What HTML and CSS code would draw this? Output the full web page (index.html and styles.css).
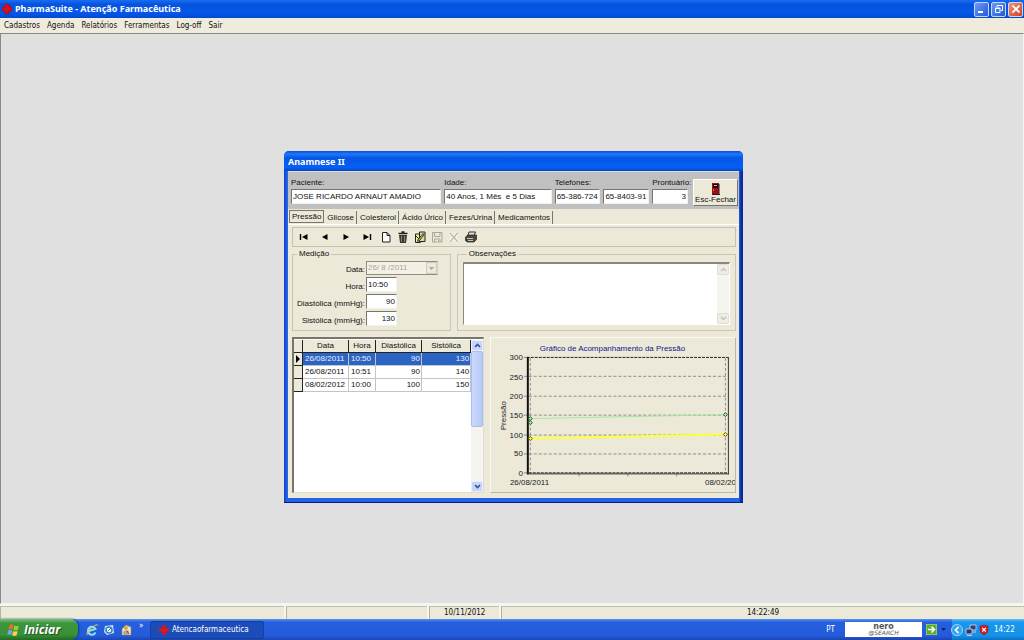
FILE: index.html
```html
<!DOCTYPE html>
<html lang="pt-BR">
<head>
<meta charset="utf-8">
<title>PharmaSuite - Atenção Farmacêutica</title>
<link rel="stylesheet" href="styles.css">
</head>
<body>
<header class="titlebar">
  <svg class="cross" width="12" height="12" viewBox="0 0 12 12"><path d="M4 1h4v3h3v4H8v3H4V8H1V4h3z" fill="#e00d12" stroke="#7a1240" stroke-width=".6"/></svg>
  <h1 class="app-title">PharmaSuite - Atenção Farmacêutica</h1>
  <div class="win-buttons">
    <button class="wbtn" aria-label="Minimizar"><svg width="14" height="14"><path d="M3 10h5" stroke="#fff" stroke-width="2"/></svg></button>
    <button class="wbtn" aria-label="Restaurar"><svg width="14" height="14" fill="none" stroke="#fff"><path d="M5 5V3.500h5.500V8.500H9M5 3.500h5.500"/><path d="M3.500 6h4.500v4.500h-4.500zM3.500 6.500h4.500"/></svg></button>
    <button class="wbtn close" aria-label="Fechar"><svg width="14" height="14"><path d="M3.500 3.500l7 7M10.500 3.500l-7 7" stroke="#fff" stroke-width="1.800"/></svg></button>
  </div>
</header>
<nav class="menubar">
  <button>Cadastros</button><button>Agenda</button><button>Relatórios</button><button>Ferramentas</button><button>Log-off</button><button>Sair</button>
</nav>

<main class="workspace">
  <section class="dialog" aria-label="Anamnese II">
    <h2 class="dialog-title">Anamnese II</h2>
    <div class="dialog-body">
      <form class="patient">
        <div class="fld f-name"><label for="pac">Paciente:</label><input id="pac" value="JOSE RICARDO ARNAUT AMADIO"></div>
        <div class="fld f-age"><label for="ida">Idade:</label><input id="ida" value="40 Anos, 1 Mês  e 5 Dias"></div>
        <div class="fld f-tel"><label for="tel">Telefones:</label><input id="tel" value="65-386-724"></div>
        <div class="fld f-tel"><input aria-label="Telefone 2" value="65-8403-91"></div>
        <div class="fld f-num"><label for="pro">Prontuário:</label><input id="pro" class="num" value="3"></div>
        <button type="button" class="exit"><svg width="10" height="12" viewBox="0 0 10 12"><path d="M1 0h7v11H1z" fill="#a30c14"/><path d="M2 1h5v4H2z" fill="#200"/><path d="M3 2h3v1H3z" fill="#9cc"/><path d="M8 1v10M1 11.500h8" stroke="#222"/><path d="M2 7h1" stroke="#fc4"/></svg><span>Esc-Fechar</span></button>
      </form>

      <div class="tabs" role="tablist">
        <button class="tab on" role="tab" aria-selected="true">Pressão</button><button class="tab" role="tab">Glicose</button><button class="tab" role="tab">Colesterol</button><button class="tab" role="tab">Ácido Úrico</button><button class="tab" role="tab">Fezes/Urina</button><button class="tab" role="tab">Medicamentos</button>
      </div>

      <div class="page">
        <div class="toolbar">
          <div class="nav-group">
            <button aria-label="Primeiro"><svg width="12" height="12"><path d="M2.500 3v6" stroke="#000" stroke-width="1.400"/><path d="M9.500 3v6L4 6z"/></svg></button>
            <button aria-label="Anterior"><svg width="12" height="12"><path d="M8.500 3v6L3 6z"/></svg></button>
            <button aria-label="Próximo"><svg width="12" height="12"><path d="M3.500 3v6L9 6z"/></svg></button>
            <button aria-label="Último"><svg width="12" height="12"><path d="M9.500 3v6" stroke="#000" stroke-width="1.400"/><path d="M2.500 3v6L8 6z"/></svg></button>
          </div>
          <div class="edit-group">
            <button aria-label="Novo"><svg width="12" height="12"><path d="M2.500 1.500h4.500l3 3v6.500H2.500zM7 1.500v3h3" fill="#fff" stroke="#222"/></svg></button>
            <button aria-label="Excluir"><svg width="12" height="12"><path d="M2 4h8l-1 8H3z" fill="#3b3630"/><path d="M1.500 2.500h9M4.500 1h3" stroke="#222" stroke-width="1.400"/><path d="M4.500 5v6M7.500 5v6" stroke="#8c877c"/></svg></button>
            <button aria-label="Editar"><svg width="12" height="12"><path d="M1.500 3h5v8.500h-5z" fill="#f5ee9a" stroke="#222"/><path d="M5.500 1h5.500v9.500H5.500z" fill="#dcdcaa" stroke="#222"/><path d="M9 2.500L4 8.500l-.500 2 2-1L10 4z" fill="#b5b52e" stroke="#222" stroke-width=".8"/><path d="M2 5l3 3" stroke="#222"/></svg></button>
            <button aria-label="Salvar" disabled><svg width="12" height="12" fill="none" stroke="#aca899"><path d="M1.500 1.500h9.500v9.500h-9.500z"/><path d="M3.500 1.500v4h5.500v-4M3.500 11V8h5.500v3M7.500 9v1"/></svg></button>
            <button aria-label="Cancelar" disabled><svg width="12" height="12" fill="none"><path d="M2 2l8 9M10 1.500L2 11" stroke="#fff" stroke-width="3"/><path d="M2 2l8 9M10 1.500L2 11" stroke="#bcb8a8" stroke-width="1.400"/></svg></button>
            <button aria-label="Imprimir"><svg width="12" height="12"><path d="M4 1h6.500l-1.500 4H2.500z" fill="#ddd" stroke="#333"/><path d="M.500 6L3 4h8.500v4.500L9 11H2L.500 9.500z" fill="#4a473f" stroke="#222" stroke-width=".7"/><path d="M2 7.500h6M3 9.500h5" stroke="#c9c5b5"/></svg></button>
          </div>
        </div>

        <div class="row">
          <fieldset class="box measure">
            <legend>Medição</legend>
            <label for="dt">Data:</label>
            <span class="combo"><input id="dt" value="26/ 8 /2011" disabled><button aria-label="Abrir calendário" disabled><svg width="7" height="5"><path d="M1 1h5L3.500 4z" fill="#aca899"/></svg></button></span>
            <label for="hr">Hora:</label><input id="hr" value="10:50">
            <label for="di">Diastólica (mmHg):</label><input id="di" class="num" value="90">
            <label for="si">Sistólica (mmHg):</label><input id="si" class="num" value="130">
          </fieldset>
          <fieldset class="box notes">
            <legend>Observações</legend>
            <div class="memo">
              <textarea aria-label="Observações"></textarea>
              <div class="scroll off">
                <button aria-label="Acima" disabled><svg width="9" height="9"><path d="M2 6l2.500-2.500L7 6" fill="none" stroke="#c4c2b8" stroke-width="1.500"/></svg></button>
                <button aria-label="Abaixo" disabled><svg width="9" height="9"><path d="M2 3l2.500 2.500L7 3" fill="none" stroke="#c4c2b8" stroke-width="1.500"/></svg></button>
              </div>
            </div>
          </fieldset>
        </div>

        <div class="row data">
          <div class="grid">
            <div class="sheet">
            <table>
              <colgroup><col class="c-ind"><col class="c-date"><col class="c-hour"><col class="c-dia"><col class="c-sis"></colgroup>
              <thead><tr><th></th><th>Data</th><th>Hora</th><th>Diastólica</th><th>Sistólica</th></tr></thead>
              <tbody>
                <tr class="sel"><th><svg width="5" height="8"><path d="M0 0v8l4-4z"/></svg></th><td>26/08/2011</td><td>10:50</td><td>90</td><td>130</td></tr>
                <tr><th></th><td>26/08/2011</td><td>10:51</td><td>90</td><td>140</td></tr>
                <tr><th></th><td>08/02/2012</td><td>10:00</td><td>100</td><td>150</td></tr>
              </tbody>
            </table>
            </div>
            <div class="scroll">
              <button aria-label="Acima"><svg width="9" height="9"><path d="M2 6l2.500-2.500L7 6" fill="none" stroke="#33518c" stroke-width="1.600"/></svg></button>
              <span class="thumb"></span>
              <button class="down" aria-label="Abaixo"><svg width="9" height="9"><path d="M2 3l2.500 2.500L7 3" fill="none" stroke="#33518c" stroke-width="1.600"/></svg></button>
            </div>
          </div>
          <div class="chart">
            <svg viewBox="-1 0 245 155" role="img" aria-label="Gráfico de Acompanhamento da Pressão">
              <text class="ctitle" x="121" y="13" text-anchor="middle">Gráfico de Acompanhamento da Pressão</text>
              <text x="14" y="78" text-anchor="middle" transform="rotate(-90 14 78)">Pressão</text>
              <g text-anchor="end">
                <text x="31" y="22">300</text><text x="31" y="42">250</text><text x="31" y="61">200</text><text x="31" y="80">150</text><text x="31" y="100">100</text><text x="31" y="119">50</text><text x="31" y="139">0</text>
              </g>
              <path d="M32 19.500h3M32 38.500h3M32 58.500h3M32 77.500h3M32 97.500h3M32 116.500h3M32 135.500h3M87.500 136v3M136.500 136v3M185.500 136v3" stroke="#888"/>
              <path class="dash" d="M37 38.500h200M37 58.500h200M37 77.500h200M37 97.500h200M37 116.500h200M38.500 20v116M234.500 20v116"/>
              <path d="M35 19.500h202M37 135.500h200" stroke="#222" stroke-dasharray="3 1" fill="none"/>
              <path d="M36 19v118" stroke="#111" stroke-width="2"/>
              <path d="M35 136.500h203M237.500 19v118" stroke="#333" fill="none"/>
              <path d="M38 81L234 77" stroke="#a4e6a0"/>
              <path d="M38 101L234 97" stroke="#ffff3c" stroke-width="2"/>
              <g fill="#b8e8b0" stroke="#175c20"><path d="M38.500 79l2 2-2 2-2-2zM38.500 83l2 2-2 2-2-2zM234.500 75l2 2-2 2-2-2z"/></g>
              <g fill="#ffff50" stroke="#5c5410"><path d="M38.500 99l2 2-2 2-2-2zM234.500 95l2 2-2 2-2-2z"/></g>
              <text x="18" y="148">26/08/2011</text><text x="214" y="148">08/02/20</text>
            </svg>
          </div>
        </div>
      </div>
    </div>
  </section>
</main>

<footer class="status"><span class="s1"></span><span class="s2"></span><span class="s3">10/11/2012</span><span class="s4">14:22:49</span></footer>

<div class="taskbar">
  <button class="start"><svg width="14" height="14" viewBox="0 0 14 14"><path d="M2.500 2q2-1.500 4 0L5.500 6.500q-2-1.200-4 0z" fill="#ee6a2d"/><path d="M7.300 2.600q2 1 4.500 0L10.800 7q-2.200 1-4.400-.200z" fill="#8fd13f"/><path d="M1.300 7.500q2-1.200 4 0L4.300 12q-2-1.200-4 0z" fill="#6ea5f5"/><path d="M6.200 8q2 1 4.400 0L9.600 12.500q-2.200 1-4.400-.200z" fill="#fbd440"/></svg><span>Iniciar</span></button>
  <div class="quick">
    <button aria-label="Internet Explorer"><svg width="12" height="12" fill="none"><path d="M9.500 8.500A4 4 0 1 1 9.500 5L3 7" stroke="#8fe0f7" stroke-width="2"/><path d="M1 11Q0 8 6 3.500T11.500 1.500" stroke="#f0cf4a"/></svg></button>
    <button aria-label="Outlook Express"><svg width="12" height="12"><path d="M2 2l8-1 1 8-7 2-3-3z" fill="#cfe9f7"/><circle cx="6" cy="6" r="3" fill="#fff" stroke="#3380c4" stroke-width="1.500"/><path d="M5 7l3-3" stroke="#36a"/></svg></button>
    <button aria-label="Mostrar"><svg width="12" height="12"><path d="M2 5l4-4 5 2v8H2z" fill="#e9e1cf" stroke="#9a815b" stroke-width=".6"/><circle cx="6" cy="4" r="2" fill="#e9a63d"/><path d="M3 8l3-2 3 1-1 4H4z" fill="#b7a78c"/><path d="M7 7l2 3" stroke="#5b4a3a"/></svg></button>
  </div>
  <span class="more">»</span>
  <button class="task"><svg width="10" height="10"><path d="M3.500 0h3v3.500H10v3H6.500V10h-3V6.500H0v-3h3.500z" fill="#f01010"/></svg><span>Atencaofarmaceutica</span></button>
  <div class="lang">PT</div>
  <button class="nero" aria-label="nero search"><b>nero</b><i>@SEARCH</i></button>
  <button class="go" aria-label="Ir"><svg width="11" height="11"><rect width="11" height="11" rx="1" fill="#58ad2f" stroke="#b9e09a"/><path d="M2 5.500h6M5.500 2.500l3 3-3 3" fill="none" stroke="#fff" stroke-width="1.600"/></svg></button>
  <svg class="caret" width="5" height="4"><path d="M0 0h5L2.500 3z" fill="#0b2470"/></svg>
  <div class="tray">
    <button class="expand" aria-label="Mostrar ícones"><svg width="12" height="12"><circle cx="6" cy="6" r="5.500" fill="#3aa3ee" stroke="#9fd4fb"/><path d="M7.500 3l-3 3 3 3" fill="none" stroke="#fff" stroke-width="1.700"/></svg></button>
    <svg width="12" height="12"><path d="M5 1h6v5H5z" fill="#2d3c7a" stroke="#b9c3dd"/><path d="M1 5h6v5H1z" fill="#24346e" stroke="#b9c3dd"/><path d="M2 11.500h5M8 8h3" stroke="#c3cbe0"/></svg>
    <svg width="10" height="12"><path d="M1 2q4 0 4-1.500Q5 2 9 2v4q0 3-4 5Q1 9 1 6z" fill="#dd1d1d" stroke="#7c1630" stroke-width=".6"/><path d="M3.200 4l3.600 3.600M6.800 4L3.200 7.600" stroke="#fff" stroke-width="1.200"/></svg>
    <time>14:22</time>
  </div>
</div>
</body>
</html>
```
FILE: styles.css
```css
* { box-sizing: border-box; }
html, body { height: 100%; margin: 0; }
body {
  display: flex;
  flex-direction: column;
  overflow: hidden;
  font: 8px/10px "Liberation Sans", Arial, sans-serif;
  color: #111;
  background: #ece9d8;
}
button, input, textarea { font: inherit; color: inherit; margin: 0; padding: 0; border: 0; background: none; border-radius: 0; }
svg { display: block; flex: none; }
input, textarea { outline: 0; min-width: 0; }

.titlebar {
  display: flex;
  align-items: center;
  gap: 2px;
  height: 18px;
  padding: 0 1px;
  background: linear-gradient(#1b6cf2, #0553df 25%, #0558ea 70%, #0149d0);
}
.app-title { margin: 0; flex: 1; font: bold 9px/16px "Noto Sans", sans-serif; color: #fff; }
.win-buttons { display: flex; gap: 2px; }
.wbtn {
  width: 15px; height: 15px;
  border: 1px solid #c5d6fb;
  border-radius: 2px;
  background: linear-gradient(135deg, #6f9bf3, #2357d9);
  display: flex; align-items: center; justify-content: center;
}
.wbtn.close { background: linear-gradient(135deg, #f09579, #d2401d); }

.menubar { display: flex; gap: 7px; height: 15px; padding: 0 4px; background: #efecdd; }
.menubar button { font: 8px/14px "DejaVu Sans Condensed", sans-serif; }

.workspace {
  flex: 1;
  position: relative;
  background: #e0e0e0;
  border: 1px solid #8a8880;
  border-right-color: #f6f5ee;
  border-bottom-color: #f6f5ee;
}

.dialog {
  position: absolute;
  left: 283px; top: 117px;
  width: 459px;
  padding: 0 4px 4px;
  border-radius: 5px 5px 0 0;
  background: linear-gradient(90deg, #1040c0, #2463ea 3px, #2463ea 455px, #0a2aa0 457px);
  border-bottom: 1px solid #001c90;
}
.dialog-title {
  margin: 0 -4px;
  padding: 2px 4px 0;
  height: 20px;
  border-radius: 5px 5px 0 0;
  font: bold 9px/18px "Noto Sans", sans-serif;
  color: #fff;
  background: linear-gradient(#0a4fd0, #1f78fb 15%, #0456e4 35%, #0560f6 80%, #0347c4);
}
.dialog-body { background: #ece9d8; }

.patient { display: flex; align-items: flex-end; gap: 3px; padding: 6px 1px 3px 3px; background: #c0c0c0; border-top: 1px solid #dcdcdc; }
.fld { display: flex; flex-direction: column; padding-bottom: 2px; min-width: 0; }
.fld input { width: 100%; }
.fld label { white-space: nowrap; height: 11px; }
.f-name { flex: 151; }
.f-age { flex: 108; }
.f-tel { flex: 46; }
.f-num { flex: 36; }
.fld input, .measure > input {
  height: 15px;
  padding: 0 1px;
  background: #fff;
  border: 1px solid #77756c;
  border-right-color: #f4f2e8;
  border-bottom-color: #f4f2e8;
}
input.num { text-align: right; }
.exit {
  flex: 0 0 45px;
  height: 27px;
  margin-left: 2px;
  display: flex; flex-direction: column; align-items: center; justify-content: flex-end;
  background: #ece9d8;
  border: 1px solid #fff;
  border-right-color: #77756c;
  border-bottom-color: #77756c;
}

.tabs { display: flex; padding: 2px 0 0 1px; }
.tab { height: 13px; padding: 0 2px 0 3px; border-right: 1px solid #77756c; line-height: 12px; white-space: nowrap; }
.tab.on { border: 1px solid #77756c; padding: 0 2px; margin: -1px 0 1px; line-height: 10px; }

.page { display: flex; flex-direction: column; gap: 3px; padding: 2px 3px 5px 4px; border-top: 1px solid #fff; }
.toolbar { display: flex; align-items: center; gap: 7px; height: 20px; padding: 0 5px; border: 1px solid #c5c2b2; }
.toolbar button { display: flex; }
.nav-group { display: flex; gap: 9px; }
.edit-group { display: flex; gap: 5px; }

.row { display: flex; gap: 6px; }
.box { margin: 0; border: 1px solid #c9c6b6; min-width: 0; }
.box legend { padding: 0 2px; margin-left: 4px; height: 8px; line-height: 8px; }
.measure { flex: 159; display: grid; grid-template-columns: 72px 31px 1fr; gap: 2px 1px; padding: 3px 0 4px; }
.measure > label { grid-column: 1; text-align: right; white-space: nowrap; align-self: end; }
.measure > input { grid-column: 2; width: 100%; }
.combo { grid-column: 2 / 4; width: 72px; height: 14px; display: flex; border: 1px solid #8f8d84; border-right-color: #d6d3c4; background: #f3f1e6; }
.combo input { flex: 1; color: #aaa79a; padding-left: 1px; }
.combo button { width: 11px; display: flex; align-items: center; justify-content: center; background: #ece9d8; border: 1px solid #d0cdbe; }
.notes { flex: 271; padding: 4px 5px 5px; display: flex; flex-direction: column; }
.memo { flex: 1; display: flex; background: #fff; border: 1px solid #fff; border-top: 2px solid #8b897f; border-left: 1px solid #8b897f; }
.memo textarea { flex: 1; resize: none; }
.scroll { width: 12px; display: flex; flex-direction: column; background: #f5f4ef; }
.scroll button { height: 11px; display: flex; align-items: center; justify-content: center; background: #c6d6fb; border: 1px solid #e6eefe; border-radius: 2px; }
.scroll.off { justify-content: space-between; }
.scroll.off button { background: #efeee6; border-color: #e0ded3; }
.thumb { height: 76px; background: linear-gradient(90deg, #cbdafd, #b7cbf8); border: 1px solid #a9bdf0; border-radius: 2px; }
.scroll .down { margin-top: auto; }

.data { margin-top: 3px; }
.grid { flex: 190; display: flex; padding-top: 1px; background: #fff; border: 1px solid #e0ddce; border-top: 2px solid #77756c; border-left: 2px solid #77756c; min-width: 0; }
.sheet { flex: 1; min-width: 0; }
table { width: 100%; border-collapse: separate; border-spacing: 0; table-layout: fixed; }
.c-ind { width: 9px; } .c-date { width: 46px; } .c-hour { width: 27px; } .c-dia { width: 46px; }
th { height: 13px; padding: 0; font-weight: normal; background: #ece9d8; border-right: 1px solid #222; border-bottom: 1px solid #222; }
td { height: 13px; padding: 0 1px 0 2px; border-right: 1px solid #c4c4c4; border-bottom: 1px solid #c4c4c4; white-space: nowrap; }
td:nth-child(n+4) { text-align: right; }
th svg { margin-left: 2px; }
.sel td { background: #2c64c4; color: #e8f0ff; }

.chart { flex: 245; min-width: 0; border: 1px solid #fbfaf2; border-right-color: #bbb8a8; border-bottom-color: #bbb8a8; }
.chart svg { width: 100%; height: auto; overflow: hidden; }
.chart text { font: 8px "Liberation Sans", sans-serif; fill: #222; }
.chart .ctitle { fill: #14148c; }
.dash { stroke: #8f8d86; stroke-dasharray: 3 2; fill: none; }

.status { display: flex; gap: 2px; height: 15px; padding-top: 2px; background: #f6f5ee; font: 8px/12px "DejaVu Sans Condensed", sans-serif; text-align: center; }
.status span { background: #ece9d8; border-top: 1px solid #c2bfae; border-left: 1px solid #b5b2a2; }
.s1 { flex: 284; } .s2 { flex: 141; } .s3 { flex: 69; } .s4 { flex: 524; }

.taskbar {
  display: flex; align-items: center;
  height: 21px;
  color: #fff;
  font: 8px/12px "DejaVu Sans Condensed", sans-serif;
  background: linear-gradient(#5b95f5, #2660df 15%, #245bdb 80%, #1b45b0);
}
.start {
  width: 78px; height: 21px;
  display: flex; align-items: center; gap: 3px;
  padding-left: 7px;
  border-radius: 0 8px 8px 0;
  background: linear-gradient(#7cbf7c, #3c973c 20%, #389038 75%, #226a24);
  box-shadow: 1px 0 2px #14388c;
}
.start span { font: italic bold 12px/18px "Open Sans", sans-serif; text-shadow: 1px 1px 1px #1c4a1c; }
.quick { display: flex; gap: 5px; padding-left: 8px; }
.more { width: 18px; padding: 0 0 8px 7px; }
.task { display: flex; align-items: center; gap: 3px; width: 114px; height: 18px; padding-left: 8px; margin-right: auto; background: #1c4cb8; border: 1px solid #173f9c; border-radius: 2px; }
.lang { padding-right: 10px; }
.nero { width: 77px; height: 15px; background: #fff; color: #555; display: flex; flex-direction: column; align-items: center; justify-content: center; }
.nero b { font: bold 8px/6px "DejaVu Sans", sans-serif; }
.nero i { font: italic 6px/6px "DejaVu Sans", sans-serif; }
.go { margin: 0 4px; }
.caret { margin-right: 6px; }
.tray { width: 72px; height: 21px; display: flex; align-items: center; gap: 2px; background: linear-gradient(#5cc3f8, #1a97ec 15%, #1491e8 80%, #0f6fc0); }
.expand { margin-left: -1px; }
.tray time { margin-left: 3px; }
```
